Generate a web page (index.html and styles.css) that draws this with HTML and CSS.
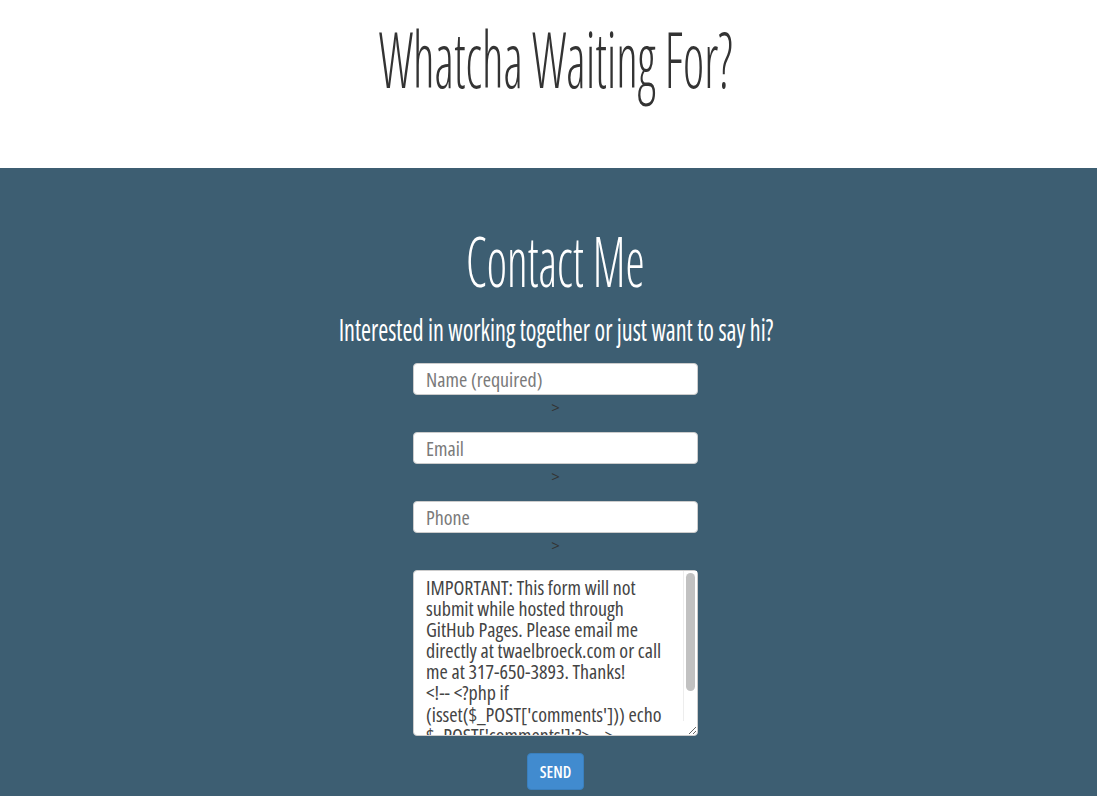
FILE: index.html
```html
<!DOCTYPE html>
<html>
<head>
<meta charset="utf-8">
<title>Contact</title>
<link rel="stylesheet" href="styles.css">
</head>
<body>
<header class="top">
  <h1 class="title"><span class="squeeze">Whatcha Waiting For?</span></h1>
</header>
<section class="contact">
  <h2 class="contact-title"><span class="squeeze">Contact Me</span></h2>
  <p class="subtitle"><span class="squeeze">Interested in working together or just want to say hi?</span></p>
  <form class="form">
    <div class="field">
      <input class="input" type="text" placeholder="Name (required)">
      <div class="gt">&gt;</div>
    </div>
    <div class="field">
      <input class="input" type="text" placeholder="Email">
      <div class="gt">&gt;</div>
    </div>
    <div class="field">
      <input class="input" type="text" placeholder="Phone">
      <div class="gt">&gt;</div>
    </div>
    <div class="message-wrap">
      <textarea class="message">IMPORTANT: This form will not submit while hosted through GitHub Pages. Please email me directly at twaelbroeck.com or call me at 317-650-3893. Thanks!
&lt;!-- &lt;?php if (isset($_POST['comments'])) echo $_POST['comments'];?&gt; --&gt;</textarea>
      <div class="scrollbar"><div class="thumb"></div></div>
    </div>
    <button class="send" type="button">SEND</button>
  </form>
</section>
</body>
</html>
```
FILE: styles.css
```css
html, body {
  margin: 0;
  padding: 0;
}
body {
  font-family: "Open Sans", "Liberation Sans", sans-serif;
  background: #3d5e72;
  min-height: 796px;
}
.top {
  background: #ffffff;
  height: 168px;
  padding-left: 14px;
  overflow: hidden;
}
.title {
  margin: 20px 0 0 0;
  font-weight: 300;
  font-size: 77px;
  line-height: 77px;
  color: #333333;
  text-align: center;
  font-stretch: 75%;
}
.squeeze {
  display: inline-block;
}
.title .squeeze {
  transform: scaleX(0.655);
}
.contact {
  padding: 0 0 0 14px;
  text-align: center;
}
.contact-title {
  margin: 0;
  padding-top: 57px;
  font-weight: 300;
  font-size: 70px;
  line-height: 70px;
  color: #ffffff;
  font-stretch: 75%;
}
.contact-title .squeeze {
  transform: scaleX(0.69);
}
.subtitle {
  margin: 17px 0 0 0;
  font-size: 30px;
  line-height: 36px;
  font-weight: 400;
  color: #ffffff;
  font-stretch: 75%;
}
.subtitle .squeeze {
  transform: scaleX(0.805);
}
.form {
  width: 285px;
  margin: 15px auto 0 auto;
  display: flex;
  flex-direction: column;
  align-items: stretch;
}
.field {
  margin-bottom: 17px;
}
.input {
  display: block;
  box-sizing: border-box;
  width: 285px;
  height: 32px;
  border: 1px solid #cccccc;
  border-radius: 4px;
  background: #ffffff;
  padding: 0 12px;
  font-family: "Open Sans", "Liberation Sans", sans-serif;
  font-stretch: 75%;
  font-size: 20px;
  color: #555555;
  outline: none;
}
.input::placeholder {
  color: #7a7a7a;
}
.gt {
  height: 18px;
  padding-top: 2px;
  line-height: 20px;
  font-size: 15px;
  color: #333333;
  text-align: center;
}
.message-wrap {
  position: relative;
  width: 285px;
  height: 166px;
}
.message {
  display: block;
  box-sizing: border-box;
  width: 285px;
  height: 166px;
  border: 1px solid #cccccc;
  border-radius: 4px;
  background: #ffffff;
  padding: 6px 28px 0 12px;
  font-family: "Open Sans", "Liberation Sans", sans-serif;
  font-stretch: 75%;
  font-size: 20px;
  line-height: 21.1px;
  color: #444444;
  resize: vertical;
  overflow: hidden;
  outline: none;
  margin: 0;
}
.scrollbar {
  position: absolute;
  top: 1px;
  right: 1px;
  width: 14px;
  bottom: 15px;
  border-left: 1px solid #ededed;
  background: #ffffff;
  box-sizing: border-box;
  pointer-events: none;
}
.thumb {
  margin: 2px 0 0 2px;
  width: 9px;
  height: 118px;
  border-radius: 5px;
  background: #c1c1c1;
}
.send {
  align-self: center;
  margin-top: 17px;
  width: 57px;
  height: 37px;
  border: 1px solid #3a7fbd;
  border-radius: 4px;
  background: #418bcf;
  color: #ffffff;
  font-family: "Open Sans", "Liberation Sans", sans-serif;
  font-stretch: 75%;
  font-weight: 600;
  font-size: 16px;
  padding: 0;
}
```
